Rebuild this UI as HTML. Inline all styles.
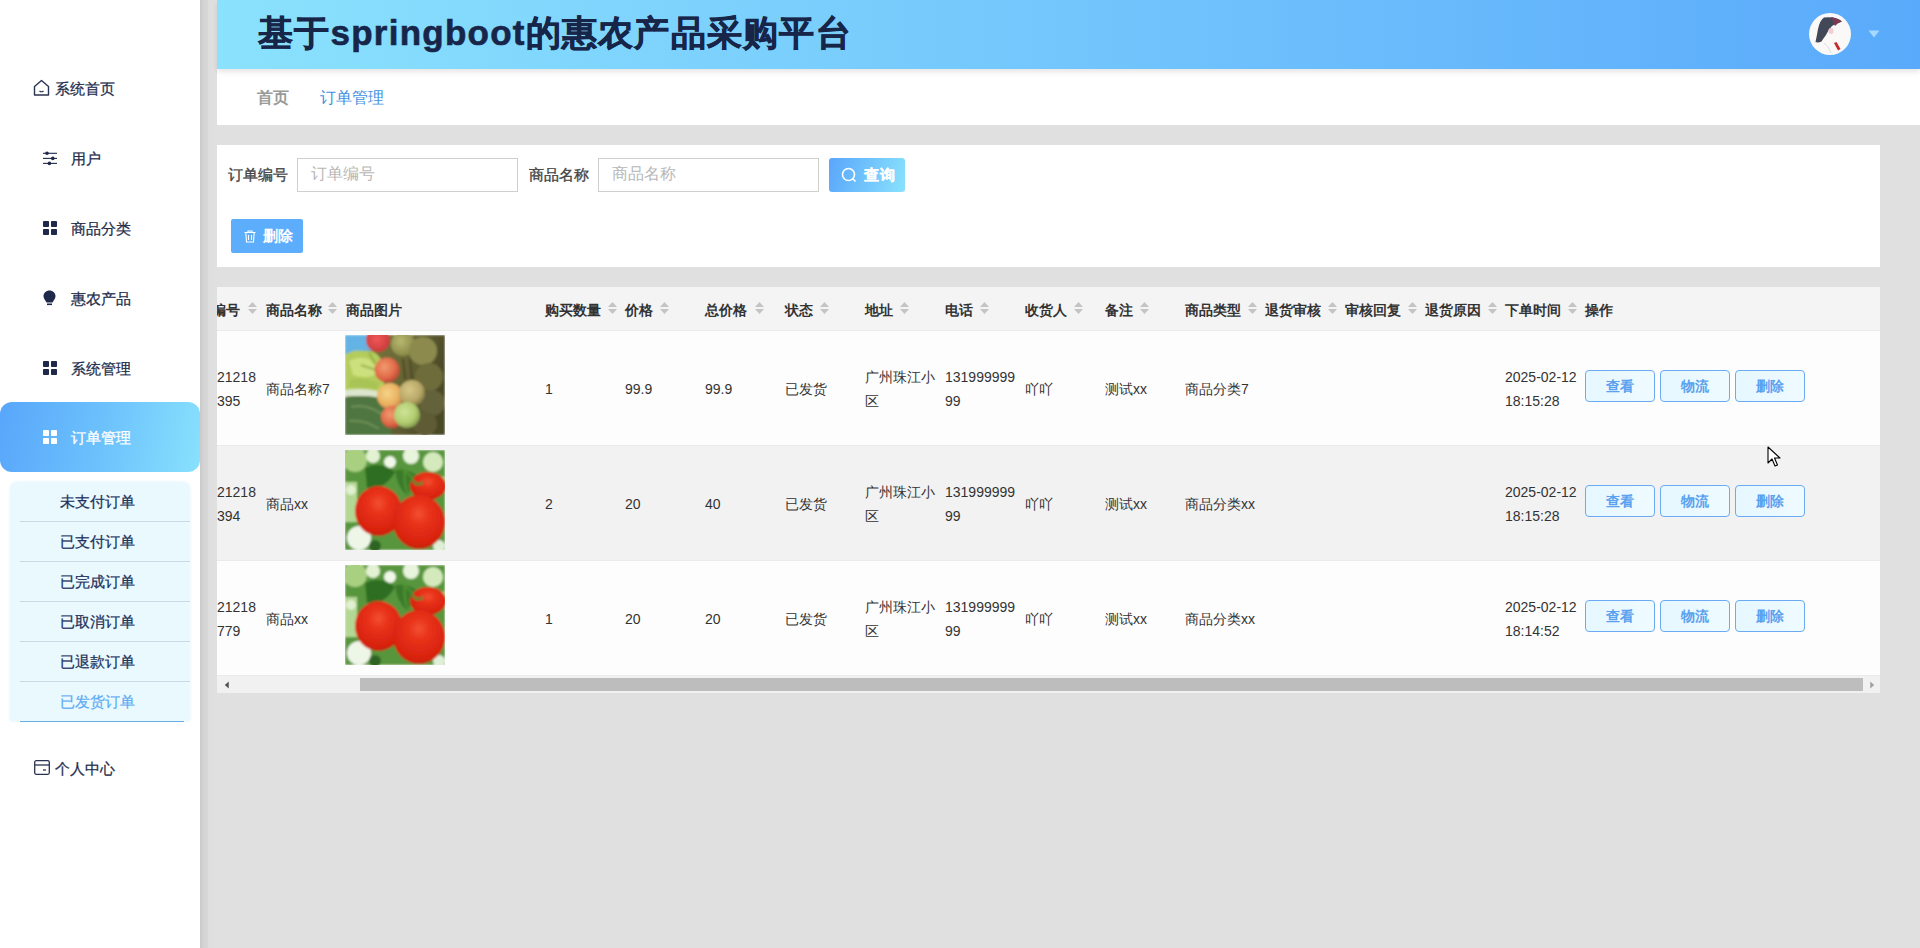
<!DOCTYPE html>
<html><head><meta charset="utf-8">
<style>
*{margin:0;padding:0;box-sizing:border-box}
html,body{width:1920px;height:948px;overflow:hidden;background:#e0e0e0;font-family:"Liberation Sans",sans-serif;color:#333}
.abs{position:absolute}
#side{position:absolute;left:0;top:0;width:200px;height:948px;background:#fff}
#strip{position:absolute;left:200px;top:0;width:17px;height:948px;background:linear-gradient(90deg,#c9c9c9 0,#d3d3d3 3px,#d8d8d8 8px,#dedede 8px,#e0e0e0 17px)}
.mi{position:absolute;left:0;width:200px;height:70px;font-size:15px;color:#232d4c;-webkit-text-stroke:0.25px #232d4c}
.mi .ic{position:absolute;left:43px;top:28px;width:14px;height:14px}
.mi .tx{position:absolute;left:71px;top:0.5px;line-height:70px}
#hdr{position:absolute;left:217px;top:0;width:1703px;height:69px;background:linear-gradient(90deg,#8ae2fd 0%,#5aaafb 100%);box-shadow:0 3px 5px rgba(0,0,0,.1);z-index:2}
#title{position:absolute;left:41px;top:10px;font-size:35px;font-weight:bold;color:#172549;letter-spacing:1.25px;-webkit-text-stroke:0.6px #172549;white-space:nowrap}
#crumb{position:absolute;left:217px;top:69px;width:1703px;height:56px;background:#fff}
#crumb span{position:absolute;top:0;line-height:58px;font-size:16px;font-weight:bold}
#search{position:absolute;left:217px;top:145px;width:1663px;height:122px;background:#fff}
.lbl{position:absolute;font-size:15px;font-weight:normal;color:#454545;line-height:34px;-webkit-text-stroke:0.35px #454545}
.inp{position:absolute;height:34px;border:1px solid #cfcfcf;background:#fff;font-size:16px;color:#b7b7b7;line-height:30px;padding-left:13px}
#table{position:absolute;left:217px;top:287px;width:1663px;height:406px;background:#fff;overflow:hidden}
.th{position:absolute;top:1px;height:44px;line-height:44px;font-size:14px;font-weight:bold;color:#333;white-space:nowrap}
.td{position:absolute;font-size:14px;color:#333;line-height:24px;white-space:nowrap}
.sort{position:absolute;top:15px;width:9px;height:12px}
.btn{position:absolute;width:70px;height:32px;border:1px solid #6aabf3;border-radius:4px;background:linear-gradient(90deg,#e6f7ff,#effbff);color:#5aa2ef;font-size:14px;font-weight:bold;text-align:center;line-height:30px}
</style></head><body>
<svg width="0" height="0" style="position:absolute">
<defs>
<filter id="soft" x="0" y="0" width="100%" height="100%"><feGaussianBlur stdDeviation="0.9"/></filter>
<radialGradient id="gr1" cx="40%" cy="38%" r="62%"><stop offset="0" stop-color="#f29a70"/><stop offset=".7" stop-color="#e06a48"/><stop offset="1" stop-color="#c44a38"/></radialGradient>
<radialGradient id="gr2" cx="40%" cy="40%" r="62%"><stop offset="0" stop-color="#f6d488"/><stop offset=".7" stop-color="#eab060"/><stop offset="1" stop-color="#d08a50"/></radialGradient>
<radialGradient id="gr3" cx="40%" cy="38%" r="62%"><stop offset="0" stop-color="#d8c888"/><stop offset=".7" stop-color="#b8a868"/><stop offset="1" stop-color="#8a8048"/></radialGradient>
<radialGradient id="gr4" cx="40%" cy="38%" r="62%"><stop offset="0" stop-color="#d0e498"/><stop offset=".7" stop-color="#b0cc70"/><stop offset="1" stop-color="#88a050"/></radialGradient>
<radialGradient id="gr5" cx="45%" cy="45%" r="60%"><stop offset="0" stop-color="#f05858"/><stop offset="1" stop-color="#c83838"/></radialGradient>
<radialGradient id="gr6" cx="40%" cy="38%" r="62%"><stop offset="0" stop-color="#b8b870"/><stop offset="1" stop-color="#8a8a48"/></radialGradient>
<radialGradient id="tm" cx="50%" cy="35%" r="70%"><stop offset="0" stop-color="#f25030"/><stop offset=".3" stop-color="#e8321a"/><stop offset=".8" stop-color="#d8220e"/><stop offset="1" stop-color="#b41a0a"/></radialGradient>
<linearGradient id="olive" x1="0" y1="0" x2="1" y2="0.3"><stop offset="0" stop-color="#7a7a40"/><stop offset=".6" stop-color="#6a6836"/><stop offset="1" stop-color="#4a4828"/></linearGradient>
<symbol id="grape" viewBox="0 0 100 100">
<g filter="url(#soft)">
<rect width="100" height="100" fill="url(#olive)"/>
<path d="M0 0 H30 L28 16 Q18 14 10 20 L0 24Z" fill="#64b4e4"/>
<path d="M0 20 Q8 14 18 16 Q30 14 36 24 L40 56 Q22 60 0 58 Z" fill="#b4cc5c"/>
<path d="M4 26 Q14 20 24 24 Q32 30 30 40 Q20 44 8 40Z" fill="#cce07e"/>
<path d="M6 44 Q20 42 34 48 L32 54 Q18 52 4 52Z" fill="#a8c455"/>
<path d="M24 18 L30 28 M16 30 L34 36" stroke="#8aa840" stroke-width="1.5"/>
<path d="M0 55 Q20 52 40 58 L42 64 Q20 59 0 62Z" fill="#dce6cc"/>
<path d="M0 62 Q25 59 44 66 L46 100 H0 Z" fill="#4f7440"/>
<path d="M6 72 Q22 68 38 80 M4 86 Q20 84 34 94" stroke="#6a8c54" stroke-width="2.5" fill="none"/>
<circle cx="58" cy="9" r="12" fill="url(#gr6)"/>
<circle cx="78" cy="16" r="14" fill="#8c8a4e"/>
<circle cx="84" cy="42" r="14" fill="#6e6c3a"/>
<path d="M58 24 L60 44 M65 24 L67 44" stroke="#4e4a2a" stroke-width="2"/>
<circle cx="87" cy="68" r="13" fill="#64623a"/>
<circle cx="33" cy="5" r="12" fill="url(#gr5)"/>
<circle cx="42" cy="35" r="12.5" fill="url(#gr1)"/>
<circle cx="45" cy="61" r="13" fill="url(#gr2)"/>
<circle cx="67" cy="58" r="13" fill="url(#gr3)"/>
<circle cx="47" cy="82" r="11" fill="url(#gr1)"/>
<circle cx="80" cy="89" r="12" fill="#5e5c34"/>
<circle cx="62" cy="80" r="13" fill="url(#gr4)"/>
</g>
</symbol>
<symbol id="tomato" viewBox="0 0 100 100">
<g filter="url(#soft)">
<rect width="100" height="100" fill="#58963e"/>
<circle cx="10" cy="10" r="12" fill="#a8d080"/>
<circle cx="28" cy="6" r="7" fill="#e4f2d4"/>
<circle cx="45" cy="12" r="6" fill="#f0f8e8"/>
<circle cx="66" cy="6" r="8" fill="#e8f4dc"/>
<circle cx="88" cy="12" r="10" fill="#d4eabc"/>
<circle cx="96" cy="32" r="6" fill="#a8d488"/>
<path d="M20 18 Q35 10 50 22 Q40 40 22 38Z" fill="#2f6e22"/>
<path d="M50 20 Q65 18 75 28 L62 45 Q52 38 50 20Z" fill="#3a7a2a"/>
<rect x="0" y="32" width="12" height="40" fill="#b4d894"/>
<circle cx="6" cy="40" r="5" fill="#e0f0d0"/>
<circle cx="14" cy="88" r="12" fill="#eef6e8"/>
<circle cx="30" cy="96" r="6" fill="#2e6420"/>
<circle cx="94" cy="96" r="6" fill="#e0f0d8"/>
<path d="M55 18 Q66 24 72 34 M60 20 Q58 34 64 46 M72 34 Q80 24 88 26" stroke="#4e9030" stroke-width="2.5" fill="none"/>
<ellipse cx="83" cy="36" rx="18" ry="14" fill="url(#tm)"/>
<ellipse cx="33.5" cy="61" rx="23.5" ry="25" fill="url(#tm)"/>
<ellipse cx="74" cy="72" rx="26" ry="27" fill="url(#tm)"/>
<path d="M66 28 Q72 38 78 32" stroke="#4a8a30" stroke-width="2.5" fill="none"/>
</g>
</symbol>
</defs></svg>

<div id="side">
  <div class="mi" style="top:53px"><svg class="ic" style="left:33px;top:26px;width:17px;height:18px" viewBox="0 0 17 18"><path d="M1.5 7.5 L8.5 1.5 L15.5 7.5 V16 H1.5 Z" fill="none" stroke="#2a3350" stroke-width="1.4" stroke-linejoin="round"/><path d="M6.5 12 Q8.5 13.5 10.5 12" fill="none" stroke="#2a3350" stroke-width="1.2"/></svg><span class="tx" style="left:55px">系统首页</span></div>
  <div class="mi" style="top:123px"><svg class="ic" style="left:43px;top:28px;width:14px;height:15px" viewBox="0 0 14 15"><g stroke="#1f2a4a" stroke-width="1.1"><line x1="0" y1="2.3" x2="14" y2="2.3"/><line x1="0" y1="7.4" x2="14" y2="7.4"/><line x1="0" y1="12.4" x2="14" y2="12.4"/></g><g fill="#1f2a4a"><circle cx="4" cy="2.3" r="1.8"/><circle cx="9.8" cy="7.4" r="1.8"/><circle cx="6.4" cy="12.4" r="1.8"/></g></svg><span class="tx">用户</span></div>
  <div class="mi" style="top:193px"><svg class="ic" viewBox="0 0 14 14"><g fill="#1f2a4a"><rect x="0" y="0" width="6" height="6" rx="0.8"/><rect x="8" y="0" width="6" height="6" rx="0.8"/><rect x="0" y="8" width="6" height="6" rx="0.8"/><rect x="8" y="8" width="6" height="6" rx="0.8"/></g></svg><span class="tx">商品分类</span></div>
  <div class="mi" style="top:263px"><svg class="ic" style="left:43px;top:27px;width:13px;height:16px" viewBox="0 0 13 16"><path d="M6.5 0.5 C10 0.5 12.5 3 12.5 6.3 C12.5 9 10.5 10.5 9.5 12.5 H3.5 C2.5 10.5 0.5 9 0.5 6.3 C0.5 3 3 0.5 6.5 0.5 Z" fill="#1f2a4a"/><rect x="4" y="13.5" width="5" height="1.6" fill="#1f2a4a"/></svg><span class="tx">惠农产品</span></div>
  <div class="mi" style="top:333px"><svg class="ic" viewBox="0 0 14 14"><g fill="#1f2a4a"><rect x="0" y="0" width="6" height="6" rx="0.8"/><rect x="8" y="0" width="6" height="6" rx="0.8"/><rect x="0" y="8" width="6" height="6" rx="0.8"/><rect x="8" y="8" width="6" height="6" rx="0.8"/></g></svg><span class="tx">系统管理</span></div>
  <div class="mi" style="top:402px;background:linear-gradient(100deg,#58a6fb 0%,#6cc1fc 50%,#88e1fd 100%);border-radius:12px;color:#fff;-webkit-text-stroke:0.3px #fff"><svg class="ic" style="top:28px" viewBox="0 0 14 14"><g fill="#fff"><rect x="0" y="0" width="6" height="6" rx="0.8"/><rect x="8" y="0" width="6" height="6" rx="0.8"/><rect x="0" y="8" width="6" height="6" rx="0.8"/><rect x="8" y="8" width="6" height="6" rx="0.8"/></g></svg><span class="tx">订单管理</span></div>
  <div id="sub" style="position:absolute;left:10px;top:482px;width:180px;height:239px;background:#e9f9fe;border-radius:8px 8px 0 0;box-shadow:0 0 3px rgba(200,235,250,.6)">
<div class="abs" style="left:10px;top:0px;width:170px;height:40px;line-height:40px;text-align:center;padding-right:15px;font-size:15px;color:#22305a;-webkit-text-stroke:0.25px #22305a;border-bottom:1px solid #c9d8e2">未支付订单</div>
<div class="abs" style="left:10px;top:40px;width:170px;height:40px;line-height:40px;text-align:center;padding-right:15px;font-size:15px;color:#22305a;-webkit-text-stroke:0.25px #22305a;border-bottom:1px solid #c9d8e2">已支付订单</div>
<div class="abs" style="left:10px;top:80px;width:170px;height:40px;line-height:40px;text-align:center;padding-right:15px;font-size:15px;color:#22305a;-webkit-text-stroke:0.25px #22305a;border-bottom:1px solid #c9d8e2">已完成订单</div>
<div class="abs" style="left:10px;top:120px;width:170px;height:40px;line-height:40px;text-align:center;padding-right:15px;font-size:15px;color:#22305a;-webkit-text-stroke:0.25px #22305a;border-bottom:1px solid #c9d8e2">已取消订单</div>
<div class="abs" style="left:10px;top:160px;width:170px;height:40px;line-height:40px;text-align:center;padding-right:15px;font-size:15px;color:#22305a;-webkit-text-stroke:0.25px #22305a;border-bottom:1px solid #c9d8e2">已退款订单</div>
<div class="abs" style="left:10px;top:200px;width:164px;height:40px;line-height:40px;text-align:center;padding-right:9px;font-size:15px;color:#5eaaf5;-webkit-text-stroke:0.2px #5eaaf5;border-bottom:1px solid #6aaee8">已发货订单</div>
  </div>
  <div class="mi" style="top:733px"><svg class="ic" style="left:34px;top:27px;width:16px;height:15px" viewBox="0 0 16 15"><rect x="0.7" y="0.7" width="14.6" height="13.6" rx="1.5" fill="none" stroke="#2a3350" stroke-width="1.3"/><line x1="0.7" y1="5" x2="15.3" y2="5" stroke="#2a3350" stroke-width="1.3"/><line x1="9" y1="10" x2="12" y2="10" stroke="#2a3350" stroke-width="1.3"/></svg><span class="tx" style="left:55px">个人中心</span></div>
</div>
<div id="strip"></div>
<div id="hdr"><div id="title">基于springboot的惠农产品采购平台</div>
<svg class="abs" style="left:1592px;top:12.6px;width:42px;height:42px" viewBox="0 0 42 42"><circle cx="21" cy="21" r="21" fill="#fbf8f8"/><path d="M15 4.5 Q22 3.5 27.6 5.4 Q31 6.5 32.9 8.5 Q27 10 23 13 Q19 17 17 22 Q14 26 12.5 28.5 Q9 30 6.5 29 Q8 22 9 16 Q11 7 15 4.5Z" fill="#2f3446" opacity=".9"/><path d="M22 4 Q29 5 32.9 8.5 Q28 10 26 13 Q24 8 22 4Z" fill="#7a3a50"/><ellipse cx="22" cy="18" rx="2.6" ry="3" fill="#f0cdd2"/><path d="M25 30 L27.5 29 L31.5 36 L29 37.5Z" fill="#c82828"/><path d="M15 30 Q20 33 22 40" stroke="#e0dce4" stroke-width="1" fill="none"/></svg>
<svg class="abs" style="left:1651px;top:30px;width:12px;height:8px" viewBox="0 0 12 8"><path d="M0.5 0.5 H11.5 L6 7.5 Z" fill="#a6dafd"/></svg></div>
<div id="crumb"><span style="left:40px;color:#9a9a9a">首页</span><span style="left:103px;color:#3f8fdf;font-weight:normal">订单管理</span></div>
<div id="search">
  <div class="lbl" style="left:11px;top:13px">订单编号</div>
  <div class="inp" style="left:80px;top:13px;width:221px">订单编号</div>
  <div class="lbl" style="left:312px;top:13px">商品名称</div>
  <div class="inp" style="left:381px;top:13px;width:221px">商品名称</div>
  <div class="abs" style="left:612px;top:13px;width:76px;height:34px;border-radius:3px;background:linear-gradient(105deg,#5aa6fb,#88e2fd);color:#fff;font-size:15px;font-weight:bold;line-height:34px;padding-left:35px;letter-spacing:1px;-webkit-text-stroke:0.3px #fff"><svg class="abs" style="left:12px;top:9px;width:16px;height:16px" viewBox="0 0 16 16"><circle cx="7.5" cy="7.5" r="6" fill="none" stroke="#fff" stroke-width="1.6"/><line x1="11.5" y1="11.5" x2="14.5" y2="14.5" stroke="#fff" stroke-width="1.6"/></svg>查询</div>
  <div class="abs" style="left:14px;top:74px;width:72px;height:34px;border-radius:2px;background:#5caefc;color:#fff;font-size:15px;font-weight:bold;line-height:34px;padding-left:32px"><svg class="abs" style="left:13px;top:11px;width:12px;height:13px" viewBox="0 0 12 13"><path d="M0.5 2.5 H11.5 M4 2.5 V1 H8 V2.5 M1.8 2.5 L2.5 12 H9.5 L10.2 2.5 M4.5 5 V10 M7.5 5 V10" fill="none" stroke="#fff" stroke-width="1.1"/></svg>删除</div>
</div>
<div id="table">
<div class="abs" style="left:0;top:0;width:1663px;height:44px;background:#f4f4f4;border-bottom:1px solid #ebebeb"></div>
<div class="th" style="left:-33px">订单编号</div>
<svg class="sort" style="left:31px" viewBox="0 0 9 12"><path d="M4.5 0 L9 5 H0 Z M0 7 H9 L4.5 12 Z" fill="#c4c4c4"/></svg>
<div class="th" style="left:49px">商品名称</div>
<svg class="sort" style="left:111px" viewBox="0 0 9 12"><path d="M4.5 0 L9 5 H0 Z M0 7 H9 L4.5 12 Z" fill="#c4c4c4"/></svg>
<div class="th" style="left:129px">商品图片</div>
<div class="th" style="left:328px">购买数量</div>
<svg class="sort" style="left:391px" viewBox="0 0 9 12"><path d="M4.5 0 L9 5 H0 Z M0 7 H9 L4.5 12 Z" fill="#c4c4c4"/></svg>
<div class="th" style="left:408px">价格</div>
<svg class="sort" style="left:443px" viewBox="0 0 9 12"><path d="M4.5 0 L9 5 H0 Z M0 7 H9 L4.5 12 Z" fill="#c4c4c4"/></svg>
<div class="th" style="left:488px">总价格</div>
<svg class="sort" style="left:538px" viewBox="0 0 9 12"><path d="M4.5 0 L9 5 H0 Z M0 7 H9 L4.5 12 Z" fill="#c4c4c4"/></svg>
<div class="th" style="left:568px">状态</div>
<svg class="sort" style="left:603px" viewBox="0 0 9 12"><path d="M4.5 0 L9 5 H0 Z M0 7 H9 L4.5 12 Z" fill="#c4c4c4"/></svg>
<div class="th" style="left:648px">地址</div>
<svg class="sort" style="left:683px" viewBox="0 0 9 12"><path d="M4.5 0 L9 5 H0 Z M0 7 H9 L4.5 12 Z" fill="#c4c4c4"/></svg>
<div class="th" style="left:728px">电话</div>
<svg class="sort" style="left:763px" viewBox="0 0 9 12"><path d="M4.5 0 L9 5 H0 Z M0 7 H9 L4.5 12 Z" fill="#c4c4c4"/></svg>
<div class="th" style="left:808px">收货人</div>
<svg class="sort" style="left:857px" viewBox="0 0 9 12"><path d="M4.5 0 L9 5 H0 Z M0 7 H9 L4.5 12 Z" fill="#c4c4c4"/></svg>
<div class="th" style="left:888px">备注</div>
<svg class="sort" style="left:923px" viewBox="0 0 9 12"><path d="M4.5 0 L9 5 H0 Z M0 7 H9 L4.5 12 Z" fill="#c4c4c4"/></svg>
<div class="th" style="left:968px">商品类型</div>
<svg class="sort" style="left:1031px" viewBox="0 0 9 12"><path d="M4.5 0 L9 5 H0 Z M0 7 H9 L4.5 12 Z" fill="#c4c4c4"/></svg>
<div class="th" style="left:1048px">退货审核</div>
<svg class="sort" style="left:1111px" viewBox="0 0 9 12"><path d="M4.5 0 L9 5 H0 Z M0 7 H9 L4.5 12 Z" fill="#c4c4c4"/></svg>
<div class="th" style="left:1128px">审核回复</div>
<svg class="sort" style="left:1191px" viewBox="0 0 9 12"><path d="M4.5 0 L9 5 H0 Z M0 7 H9 L4.5 12 Z" fill="#c4c4c4"/></svg>
<div class="th" style="left:1208px">退货原因</div>
<svg class="sort" style="left:1271px" viewBox="0 0 9 12"><path d="M4.5 0 L9 5 H0 Z M0 7 H9 L4.5 12 Z" fill="#c4c4c4"/></svg>
<div class="th" style="left:1288px">下单时间</div>
<svg class="sort" style="left:1351px" viewBox="0 0 9 12"><path d="M4.5 0 L9 5 H0 Z M0 7 H9 L4.5 12 Z" fill="#c4c4c4"/></svg>
<div class="th" style="left:1368px">操作</div>
<div class="abs" style="left:0;top:44px;width:1663px;height:115px;background:#fdfdfd;border-bottom:1px solid #ebebeb"></div>
<div class="td" style="left:0px;top:78px">21218<br>395</div>
<div class="td" style="left:49px;top:90px">商品名称7</div>
<svg class="abs" style="left:128px;top:48px;width:100px;height:100px"><use href="#grape"/></svg>
<div class="td" style="left:328px;top:90px">1</div>
<div class="td" style="left:408px;top:90px">99.9</div>
<div class="td" style="left:488px;top:90px">99.9</div>
<div class="td" style="left:568px;top:90px">已发货</div>
<div class="td" style="left:648px;top:78px">广州珠江小<br>区</div>
<div class="td" style="left:728px;top:78px">131999999<br>99</div>
<div class="td" style="left:808px;top:90px">吖吖</div>
<div class="td" style="left:888px;top:90px">测试xx</div>
<div class="td" style="left:968px;top:90px">商品分类7</div>
<div class="td" style="left:1288px;top:78px">2025-02-12<br>18:15:28</div>
<div class="btn" style="left:1368px;top:83px">查看</div>
<div class="btn" style="left:1443px;top:83px">物流</div>
<div class="btn" style="left:1518px;top:83px">删除</div>
<div class="abs" style="left:0;top:159px;width:1663px;height:115px;background:#f2f2f2;border-bottom:1px solid #ebebeb"></div>
<div class="td" style="left:0px;top:193px">21218<br>394</div>
<div class="td" style="left:49px;top:205px">商品xx</div>
<svg class="abs" style="left:128px;top:163px;width:100px;height:100px"><use href="#tomato"/></svg>
<div class="td" style="left:328px;top:205px">2</div>
<div class="td" style="left:408px;top:205px">20</div>
<div class="td" style="left:488px;top:205px">40</div>
<div class="td" style="left:568px;top:205px">已发货</div>
<div class="td" style="left:648px;top:193px">广州珠江小<br>区</div>
<div class="td" style="left:728px;top:193px">131999999<br>99</div>
<div class="td" style="left:808px;top:205px">吖吖</div>
<div class="td" style="left:888px;top:205px">测试xx</div>
<div class="td" style="left:968px;top:205px">商品分类xx</div>
<div class="td" style="left:1288px;top:193px">2025-02-12<br>18:15:28</div>
<div class="btn" style="left:1368px;top:198px">查看</div>
<div class="btn" style="left:1443px;top:198px">物流</div>
<div class="btn" style="left:1518px;top:198px">删除</div>
<div class="abs" style="left:0;top:274px;width:1663px;height:115px;background:#fdfdfd;border-bottom:1px solid #ebebeb"></div>
<div class="td" style="left:0px;top:308px">21218<br>779</div>
<div class="td" style="left:49px;top:320px">商品xx</div>
<svg class="abs" style="left:128px;top:278px;width:100px;height:100px"><use href="#tomato"/></svg>
<div class="td" style="left:328px;top:320px">1</div>
<div class="td" style="left:408px;top:320px">20</div>
<div class="td" style="left:488px;top:320px">20</div>
<div class="td" style="left:568px;top:320px">已发货</div>
<div class="td" style="left:648px;top:308px">广州珠江小<br>区</div>
<div class="td" style="left:728px;top:308px">131999999<br>99</div>
<div class="td" style="left:808px;top:320px">吖吖</div>
<div class="td" style="left:888px;top:320px">测试xx</div>
<div class="td" style="left:968px;top:320px">商品分类xx</div>
<div class="td" style="left:1288px;top:308px">2025-02-12<br>18:14:52</div>
<div class="btn" style="left:1368px;top:313px">查看</div>
<div class="btn" style="left:1443px;top:313px">物流</div>
<div class="btn" style="left:1518px;top:313px">删除</div>
<div class="abs" style="left:0;top:389px;width:1663px;height:17px;background:#f1f1f1"></div>
<div class="abs" style="left:143px;top:391px;width:1503px;height:12.5px;background:#bdbdbd"></div>
<svg class="abs" style="left:7px;top:393.5px;width:6px;height:8px" viewBox="0 0 6 9"><path d="M5 0.5 V8.5 L0.5 4.5 Z" fill="#505050"/></svg>
<svg class="abs" style="left:1652px;top:393.5px;width:6px;height:8px" viewBox="0 0 6 9"><path d="M1 0.5 V8.5 L5.5 4.5 Z" fill="#a0a0a0"/></svg>
</div>
<svg class="abs" style="left:1767px;top:446px;width:16px;height:22px" viewBox="0 0 16 22"><path d="M1 1 V17 L5 13 L8 20 L10.5 19 L7.5 12 H13 Z" fill="#fff" stroke="#000" stroke-width="1.1" stroke-linejoin="round"/></svg>
</body></html>
